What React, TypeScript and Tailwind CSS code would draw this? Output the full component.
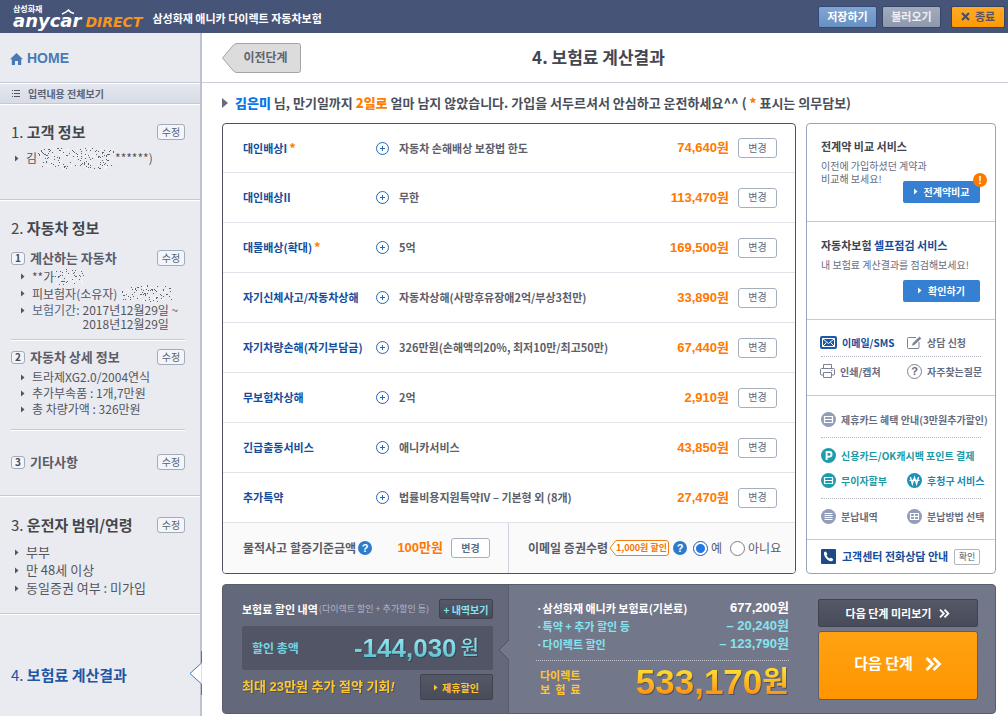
import React, { useState } from "react";

type Coverage = { name: string; required?: boolean; detail: string; price: string };

const coverages: Coverage[] = [
  { name: "대인배상I", required: true, detail: "자동차 손해배상 보장법 한도", price: "74,640" },
  { name: "대인배상II", detail: "무한", price: "113,470" },
  { name: "대물배상(확대)", required: true, detail: "5억", price: "169,500" },
  { name: "자기신체사고/자동차상해", detail: "자동차상해(사망후유장애2억/부상3천만)", price: "33,890" },
  { name: "자기차량손해(자기부담금)", detail: "326만원(손해액의20%, 최저10만/최고50만)", price: "67,440" },
  { name: "무보험차상해", detail: "2억", price: "2,910" },
  { name: "긴급출동서비스", detail: "애니카서비스", price: "43,850" },
  { name: "추가특약", detail: "법률비용지원특약IV – 기본형 외 (8개)", price: "27,470" },
];

const num = "font-['Liberation_Sans','Noto_Sans_CJK_KR',sans-serif]";

function Scramble({ width, height, seed }: { width: number; height: number; seed: number }) {
  const dots: React.ReactNode[] = [];
  let s = seed;
  const next = () => {
    s = (s * 1103515245 + 12345) % 2147483648;
    return s / 2147483648;
  };
  const count = Math.round((width * height) / 7);
  for (let i = 0; i < count; i++) {
    const x = Math.floor(next() * width);
    const y = Math.floor(next() * height);
    const tone = next();
    const dx = (x - width / 2) / (width / 2);
    const dy = (y - height / 2) / (height / 2);
    if (dx * dx * dx * dx + dy * dy * dy * dy > 1) continue;
    dots.push(<rect key={i} x={x} y={y} width="1" height="1" fill={tone > 0.65 ? "#ffffff" : "#62626f"} />);
  }
  return (
    <svg width={width} height={height} className="shrink-0" aria-hidden="true" shapeRendering="crispEdges">
      {dots}
    </svg>
  );
}

function Arrow({ className }: { className: string }) {
  return (
    <svg width="4" height="7" viewBox="0 0 4 7" className={"shrink-0 " + className} aria-hidden="true">
      <path d="M0 0.5 L3.5 3.5 L0 6.5 Z" fill="currentColor" />
    </svg>
  );
}

function EditButton({ label }: { label: string }) {
  return (
    <button
      type="button"
      aria-label={label + " 수정"}
      className="ml-auto flex h-4 w-7 shrink-0 items-center justify-center rounded-[3px] border border-[#a2abb8] bg-[#f4f5f8] pb-px text-[10px] leading-none text-[#55657a]"
    >
      수정
    </button>
  );
}

function ChangeButton({ label }: { label: string }) {
  return (
    <button
      type="button"
      aria-label={label + " 변경"}
      className="flex h-5 w-[39px] shrink-0 items-center justify-center rounded-[3px] border border-[#a5afbd] bg-white pb-px text-[10px] leading-none text-[#5c6c80]"
    >
      변경
    </button>
  );
}

function SideHeading({ no, children, edit }: { no: string; children: string; edit?: boolean }) {
  return (
    <div className="flex h-[22px] items-center">
      <h2 className="text-[15px] leading-[22px] text-[#46464d]">
        {no}. <span className="font-bold">{children}</span>
      </h2>
      {edit && <EditButton label={children} />}
    </div>
  );
}

function SubHeading({ no, children }: { no: string; children: string }) {
  return (
    <div className="flex h-5 items-center">
      <span className="flex h-[13px] w-[14px] items-center justify-center rounded-[3px] border border-[#a2abb8] bg-[#f4f5f8] text-[10px] font-bold leading-none text-[#4a4a55]">
        {no}
      </span>
      <h3 className="ml-[5px] text-[13px] font-bold text-[#5c5c68]">{children}</h3>
      <EditButton label={children} />
    </div>
  );
}

function HelpBadge() {
  return (
    <button
      type="button"
      aria-label="도움말"
      className={"flex size-[14px] shrink-0 items-center justify-center rounded-full bg-[#2f7bcb] text-[11px] font-bold leading-none text-white " + num}
    >
      ?
    </button>
  );
}

function Chevrons({ className }: { className: string }) {
  return (
    <svg viewBox="0 0 17 14" className={className} fill="none" stroke="currentColor" strokeWidth="2.8" aria-hidden="true">
      <path d="M1.5 1 L7.5 7 L1.5 13 M8.5 1 L14.5 7 L8.5 13" />
    </svg>
  );
}

function CardIcon({ color, kind }: { color: string; kind: "card" | "lines" | "grid" | "p" | "won" }) {
  return (
    <svg width="15" height="15" viewBox="0 0 15 15" className="shrink-0" fill="none" aria-hidden="true">
      <circle cx="7.5" cy="7.5" r="7.5" fill={color} />
      {kind === "card" && <path d="M3.5 4.5h8v6h-8z M3.5 7.5h8" stroke="#fff" strokeWidth="1.2" />}
      {kind === "lines" && <path d="M3.5 4.5h8M3.5 6.5h8M3.5 8.5h8M3.5 10.5h8" stroke="#fff" />}
      {kind === "grid" && <path d="M3.5 4.5h8v6h-8z M3.5 7.5h8 M7.5 4.5v6" stroke="#fff" strokeWidth="1.1" />}
      {kind === "p" && <path d="M5.6 12V4h2.6a2.3 2.3 0 0 1 0 4.7H5.6" stroke="#fff" strokeWidth="1.9" />}
      {kind === "won" && <path d="M3.4 4l2 7 2.1-6.6L9.6 11l2-7M2.5 7.3h10" stroke="#fff" strokeWidth="1.3" />}
    </svg>
  );
}

function Header() {
  return (
    <header className="flex h-[33px] items-center bg-[#465478] pl-[13px] pr-[3px]">
      <a href="#home" className="relative flex h-[33px] flex-col text-white">
        <span className="mt-[3px] text-[8px] font-bold leading-[11px]">삼성화재</span>
        <span className="flex items-baseline gap-1 font-['DejaVu_Sans',sans-serif] font-bold italic leading-[14px]">
          <span className="text-[18px]">anycar</span>
          <span className="text-[14px] text-[#f7941d]">DIRECT</span>
        </span>
        <svg width="14" height="6" viewBox="0 0 14 6" className="absolute left-12 top-[9px]" fill="none" aria-hidden="true">
          <path d="M1 5 Q5 3.5 7.5 1 Q9 3.5 13 4.5" stroke="#fff" strokeWidth="1.5" />
        </svg>
      </a>
      <p className="ml-[10px] mt-1 text-[11px] font-bold text-white">삼성화재 애니카 다이렉트 자동차보험</p>
      <div className="ml-auto flex text-[11px] font-bold leading-[17px]">
        <button type="button" className="h-[22px] w-[59px] rounded-[2px] border border-[#34497a] bg-linear-to-b from-[#83a6d3] to-[#6690c2] text-white">
          저장하기
        </button>
        <button type="button" className="ml-[5px] h-[22px] w-[59px] rounded-[2px] border border-[#364468] bg-linear-to-b from-[#a3abbd] to-[#8f98ac] text-[#eef0f5]">
          불러오기
        </button>
        <button type="button" className="ml-[10px] flex h-[22px] w-[54px] items-center justify-center gap-[5px] rounded-[2px] border border-[#364468] bg-linear-to-b from-[#ffab26] to-[#ff9a00] text-[#5b5360]">
          <svg width="9" height="9" viewBox="0 0 9 9" aria-hidden="true">
            <path d="M1 1l7 7M8 1L1 8" stroke="#4c4f66" strokeWidth="2.2" />
          </svg>
          종료
        </button>
      </div>
    </header>
  );
}

function Sidebar() {
  const section = "border-b border-t border-b-[#c6cad4] border-t-white pl-[11px] pr-[15px]";
  const item = "flex items-center gap-[7px]";
  return (
    <aside className="relative w-[202px] shrink-0 border-r-2 border-[#bfc3ce] bg-[#e9ebf0] text-[12px] text-[#55555f]">
      <a href="#home" className="flex h-[50px] items-center gap-1 border-b border-[#c6cad4] pl-[10px] pt-[2px] text-[#4a7ab5]">
        <svg width="13" height="12" viewBox="0 0 13 12" aria-hidden="true">
          <path d="M6.5 0 L13 6.2 H11.2 V12 H8 V8 H5 V12 H1.8 V6.2 H0 Z" fill="currentColor" />
        </svg>
        <span className={"text-[14px] font-bold " + num}>HOME</span>
      </a>
      <a
        href="#all"
        className="flex h-[21px] items-center gap-2 border-b border-t border-b-[#c3c8d4] border-t-white bg-linear-to-b from-[#e4e7ee] to-[#d7dbe6] pl-3 text-[10px] font-bold text-[#5c6273]"
      >
        <svg width="8" height="7" viewBox="0 0 8 7" shapeRendering="crispEdges" aria-hidden="true">
          <path d="M0 .5h1M2 .5h6M0 3.5h1M2 3.5h6M0 6.5h1M2 6.5h6" stroke="#4f5566" />
        </svg>
        입력내용 전체보기
      </a>

      <section className={section + " pb-[31px] pt-4"}>
        <SideHeading no="1" edit>고객 정보</SideHeading>
        <div className="ml-1 mt-[5px] flex h-5 items-center">
          <Arrow className="mr-[7px]" />
          김
          <Scramble width={78} height={22} seed={11} />
          ******)
        </div>
      </section>

      <section className={section + " pb-[23px] pt-4"}>
        <SideHeading no="2">자동차 정보</SideHeading>
        <div className="mt-[9px] border-b border-[#c6cad4] pb-2">
          <SubHeading no="1">계산하는 자동차</SubHeading>
          <ul className="pl-[10px]">
            <li className={item + " h-[17px]"}>
              <Arrow className="" />
              <span className="flex items-center">
                **가
                <Scramble width={30} height={17} seed={5} />
              </span>
            </li>
            <li className={item + " h-[17px]"}>
              <Arrow className="" />
              <span className="flex items-center gap-1 whitespace-nowrap">
                피보험자(소유자)
                <Scramble width={52} height={17} seed={77} />
              </span>
            </li>
            <li className="mt-px flex items-start gap-[7px] whitespace-nowrap leading-[14px]">
              <Arrow className="mt-1" />
              <span className="text-[#55657a]">보험기간:</span>
              <span className="-ml-1">
                2017년12월29일 ~<br />
                2018년12월29일
              </span>
            </li>
          </ul>
        </div>
        <div className="border-b border-t border-b-[#c6cad4] border-t-white pb-3 pt-[6px]">
          <SubHeading no="2">자동차 상세 정보</SubHeading>
          <ul className="mt-[2px] pl-[10px]">
            {["트라제XG2.0/2004연식", "추가부속품 : 1개,7만원", "총 차량가액 : 326만원"].map((t) => (
              <li key={t} className={item + " h-4"}>
                <Arrow className="" />
                {t}
              </li>
            ))}
          </ul>
        </div>
        <div className="border-t border-white pt-[21px]">
          <SubHeading no="3">기타사항</SubHeading>
        </div>
      </section>

      <section className={section + " pb-4 pt-[17px]"}>
        <SideHeading no="3" edit>운전자 범위/연령</SideHeading>
        <ul className="ml-1 mt-[7px] text-[13px]">
          {["부부", "만 48세 이상", "동일증권 여부 : 미가입"].map((t) => (
            <li key={t} className={item + " h-[18px]"}>
              <Arrow className="" />
              {t}
            </li>
          ))}
        </ul>
      </section>

      <section className="relative border-t border-white pl-[11px] pt-[49px]">
        <h2 className="text-[15px] leading-[22px] text-[#1d56a5]">
          4. <span className="font-bold">보험료 계산결과</span>
        </h2>
        <svg width="13" height="44" viewBox="0 0 13 44" className="absolute -right-[2px] top-9" aria-hidden="true">
          <path d="M12.5 12 L1 22.5 L12.5 33 Z" fill="#fff" />
          <path d="M12.5 0 V12 L1 22.5 L12.5 33 V44" fill="none" stroke="#2e7fdb" />
        </svg>
      </section>
    </aside>
  );
}

function CoveragePanel() {
  const [email, setEmail] = useState("yes");
  const radio =
    "size-[15px] shrink-0 appearance-none rounded-full border border-[#7d7d85] bg-white checked:border-[#1f57b0] checked:bg-[radial-gradient(circle,#2478e4_0,#2478e4_4px,#ffffff_5px)]";
  const line = "border-b border-[#e0e3ea] ";
  return (
    <div className="min-w-0 flex-1 overflow-hidden rounded-[4px] border border-[#50515f] bg-white">
      <table className="w-full border-separate border-spacing-0 text-[11px]">
        <tbody>
          {coverages.map((c) => (
            <tr key={c.name} className="h-[50px] first:h-[49px]">
              <th scope="row" className={line + "w-[153px] whitespace-nowrap p-0 pl-5 text-left text-[11px] font-bold text-[#134d9c]"}>
                {c.name}
                {c.required && <span className="ml-[2px] text-[13px] leading-none text-[#ff7e00]">*</span>}
              </th>
              <td className={line + "whitespace-nowrap p-0 font-bold text-[#5e5f6a]"}>
                <div className="flex items-center gap-[10px]">
                  <svg width="13" height="13" viewBox="0 0 13 13" className="shrink-0" fill="none" stroke="#2467b5" aria-hidden="true">
                    <circle cx="6.5" cy="6.5" r="6" />
                    <path d="M4 6.5h5M6.5 4v5" />
                  </svg>
                  {c.detail}
                </div>
              </td>
              <td className={line + "p-0 pr-[18px]"}>
                <div className="flex items-center justify-end gap-[9px]">
                  <span className={"whitespace-nowrap text-[13px] font-bold text-[#ff7800] " + num}>{c.price}원</span>
                  <ChangeButton label={c.name} />
                </div>
              </td>
            </tr>
          ))}
        </tbody>
      </table>
      <div className="grid h-[50px] grid-cols-2 whitespace-nowrap bg-[#fafafb] text-[12px] font-bold text-[#5a5b66]">
        <div className="flex items-center border-r border-[#cfd3dc] pl-5">
          물적사고 할증기준금액
          <span className="ml-[2px] flex">
            <HelpBadge />
          </span>
          <span className={"ml-auto text-[13px] font-bold text-[#ff7800] " + num}>100만원</span>
          <span className="ml-2 mr-[18px] flex">
            <ChangeButton label="물적사고 할증기준금액" />
          </span>
        </div>
        <div className="flex items-center pl-[19px]">
          이메일 증권수령
          <span className="relative ml-px flex h-4 w-[60px] items-center justify-end pr-[2px] text-[9px] font-bold text-[#f57400]">
            <svg width="60" height="16" viewBox="0 0 60 16" className="absolute inset-0" aria-hidden="true">
              <path d="M1 8 L6.5 1 Q7 .5 8 .5 H57 Q59.500 .5 59.500 3 V13 Q59.500 15.500 57 15.500 H8 Q7 15.500 6.500 15 Z" fill="#fff" stroke="#f57c14" />
            </svg>
            <span className="relative pb-px leading-none">1,000원 할인</span>
          </span>
          <span className="ml-1 flex">
            <HelpBadge />
          </span>
          <label className="ml-[6px] flex items-center gap-[3px] font-normal">
            <input type="radio" name="email" checked={email === "yes"} onChange={() => setEmail("yes")} className={radio} />예
          </label>
          <label className="ml-2 flex items-center gap-[3px] font-normal">
            <input type="radio" name="email" checked={email === "no"} onChange={() => setEmail("no")} className={radio} />
            아니요
          </label>
        </div>
      </div>
    </div>
  );
}

function ServicePanel() {
  const blue = "flex h-[22px] w-[77px] items-center justify-center gap-[6px] rounded-[2px] bg-[#3580d2] pb-px text-[10px] font-bold text-white";
  const link = "flex items-center gap-[5px] whitespace-nowrap";
  const divider = "mx-[14px] border-t border-dotted border-[#b3b8c4]";
  return (
    <aside className="flex w-[190px] shrink-0 flex-col rounded-[4px] border border-[#98a3bf] bg-white text-[10px] text-[#666d82]">
      <section className="h-[98px] border-b border-[#c5c9d8] px-[14px] pt-[14px]">
        <h3 className="text-[11px] font-bold leading-4 text-[#3f4550]">전계약 비교 서비스</h3>
        <p className="mt-[5px] leading-[13px]">
          이전에 가입하셨던 계약과
          <br />
          비교해 보세요!
        </p>
        <div className="relative -mt-1 ml-auto mr-px w-[77px]">
          <button type="button" className={blue}>
            <Arrow className="" />
            전계약비교
          </button>
          <span className={"absolute -right-[7px] -top-2 flex size-[14px] items-center justify-center rounded-full bg-[#ff7800] text-[11px] font-bold leading-none text-white " + num}>
            !
          </span>
        </div>
      </section>
      <section className="h-[98px] border-b border-[#c5c9d8] px-[14px] pt-[15px]">
        <h3 className="whitespace-nowrap text-[11px] font-bold leading-4 text-[#3f4550]">
          자동차보험 <span className="text-[#134d9c]">셀프점검 서비스</span>
        </h3>
        <p className="mt-[5px] whitespace-nowrap leading-[13px]">내 보험료 계산결과를 점검해보세요!</p>
        <button type="button" className={blue + " ml-auto mr-px mt-[9px]"}>
          <Arrow className="" />
          확인하기
        </button>
      </section>
      <section className="h-[76px] border-b border-[#c5c9d8] pt-2">
        <div className="flex h-7 items-center pl-[13px]">
          <a href="#mail" className={link + " w-[87px] font-bold text-[#134d9c]"}>
            <svg width="17" height="13" viewBox="0 0 17 13" className="shrink-0" aria-hidden="true">
              <rect width="17" height="13" rx="2" fill="#1c58a8" />
              <path d="M2.500 2.500h12v8h-12z M2.500 2.500L8.500 7.500L14.500 2.500 M2.500 10.500L6.500 6.500 M14.500 10.500L10.500 6.500" fill="none" stroke="#fff" />
            </svg>
            이메일/SMS
          </a>
          <a href="#consult" className={link + " font-bold"}>
            <svg width="15" height="13" viewBox="0 0 15 13" className="shrink-0" fill="none" stroke="#7a8294" aria-hidden="true">
              <path d="M9 1.500H1.500Q.5 1.500 .5 2.500V11.500Q.5 12.500 1.500 12.500H11Q12 12.500 12 11.500V6" />
              <path d="M5 9.500L6 7L12.500 .8L14.200 2.400L7.500 8.700Z" fill="#7a8294" strokeWidth=".3" />
            </svg>
            상담 신청
          </a>
        </div>
        <div className={divider} />
        <div className="flex h-[28px] items-center pl-[13px] font-bold">
          <a href="#print" className={link + " w-[87px]"}>
            <svg width="15" height="14" viewBox="0 0 15 14" className="shrink-0" fill="none" stroke="#7a8294" aria-hidden="true">
              <path d="M3.500 4V.5h8V4M3.500 11H1.500Q.5 11 .5 10V5.500Q.5 4.500 1.500 4.500H13.500Q14.500 4.500 14.500 5.500V10Q14.500 11 13.500 11H11.500" />
              <path d="M3.500 8.500h8v5h-8zM11 6.500h1.500" />
            </svg>
            인쇄/캡쳐
          </a>
          <a href="#faq" className={link}>
            <span className={"flex size-[15px] items-center justify-center rounded-full border border-[#7a8294] text-[11px] font-bold leading-none " + num}>?</span>
            자주찾는질문
          </a>
        </div>
      </section>
      <section className="h-[144px] border-b border-[#c5c9d8] pt-2 font-bold">
        <a href="#card" className={link + " mb-[2px] h-[31px] pl-[14px]"}>
          <CardIcon color="#929dba" kind="card" />
          제휴카드 혜택 안내(3만원추가할인)
        </a>
        <div className={divider} />
        <a href="#point" className={link + " mt-[5px] h-[25px] pl-[14px] text-[#1a9aa6]"}>
          <CardIcon color="#1f9cac" kind="p" />
          신용카드/OK캐시백 포인트 결제
        </a>
        <div className="flex h-[25px] items-center pl-[14px] text-[#1a9aa6]">
          <a href="#free" className={link + " w-[86px]"}>
            <CardIcon color="#1f9cac" kind="card" />
            무이자할부
          </a>
          <a href="#later" className={link + " text-[#1789b3]"}>
            <CardIcon color="#1a92bc" kind="won" />
            후청구 서비스
          </a>
        </div>
        <div className={divider + " mt-[5px]"} />
        <div className="flex h-[35px] items-center pl-[14px]">
          <a href="#list" className={link + " w-[86px]"}>
            <CardIcon color="#929dba" kind="lines" />
            분납내역
          </a>
          <a href="#method" className={link}>
            <CardIcon color="#929dba" kind="grid" />
            분납방법 선택
          </a>
        </div>
      </section>
      <section className="flex flex-1 items-center pl-[14px] pr-[15px]">
        <svg width="15" height="15" viewBox="0 0 15 15" className="shrink-0" aria-hidden="true">
          <rect width="15" height="15" rx="1" fill="#1c4a8a" />
          <path d="M3 3.500Q4.500 2 5.300 3L6.300 5Q6.300 5.800 5.500 6.300Q6.500 8.500 8.500 9.500Q9.300 8.500 10 8.800L12 10Q12.600 10.800 11.200 12Q9.500 13 6.500 10.800Q2.500 7.500 3 3.500Z" fill="#fff" />
        </svg>
        <h3 className="ml-[6px] whitespace-nowrap text-[11px] font-bold text-[#134d9c]">고객센터 전화상담 안내</h3>
        <button type="button" className="ml-auto flex h-4 w-[26px] shrink-0 items-center justify-center rounded-[2px] border border-[#b0b5c0] text-[9px] leading-none text-[#555c6b]">
          확인
        </button>
      </section>
    </aside>
  );
}

function Summary() {
  const dark = "border border-[#40434f] bg-linear-to-b from-[#555967] to-[#484c59] rounded-[2px]";
  return (
    <section className="mt-[10px] flex h-[130px] overflow-hidden rounded-[4px] border border-[#5a5d6e] bg-[#73778a] whitespace-nowrap">
      <div className="relative w-[286px] shrink-0 border-r border-[#585c6c] bg-[#64687b] pl-[19px] pr-[15px] pt-[14px]">
        <div className="flex h-5 items-center">
          <h3 className="text-[11px] font-bold text-white">보험료 할인 내역</h3>
          <span className="ml-px text-[9px] text-[#b0b6c9]">(다이렉트 할인 + 추가할인 등)</span>
          <button type="button" className={dark + " ml-auto h-5 w-[54px] text-[10px] font-bold leading-[17px] text-[#84e4ef]"}>
            + 내역보기
          </button>
        </div>
        <div className="mt-[7px] flex h-11 items-center justify-between rounded-[2px] bg-[#515566] pl-[10px] pr-[14px]">
          <span className="text-[12px] font-bold text-[#75d5e2]">할인 총액</span>
          <span className={"flex items-center gap-1 bg-linear-to-b from-[#a5f1f7] to-[#4ab8ca] bg-clip-text font-bold text-transparent drop-shadow-[1px_1px_0_#3c404d] " + num}>
            <span className="text-[26px] leading-8">-144,030</span>
            <span className="text-[20px] font-medium leading-8">원</span>
          </span>
        </div>
        <div className="mt-1 flex h-[26px] items-center">
          <span className={"text-[13px] font-bold text-[#ffc72e] drop-shadow-[1px_1px_0_#4c4f5c] " + num}>
            최대 23만원 추가 절약 기회<i>!</i>
          </span>
          <button type="button" className={dark + " ml-auto flex h-[26px] w-[73px] items-center justify-center gap-1 text-[10px] font-bold text-[#ffc72e]"}>
            <Arrow className="" />
            제휴할인
          </button>
        </div>
        <svg width="11" height="20" viewBox="0 0 11 20" className="absolute -right-px top-[55px]" aria-hidden="true">
          <path d="M11 0 L1 10 L11 20 Z" fill="#73778a" />
          <path d="M11 0 L1 10 L11 20" fill="none" stroke="#505462" />
        </svg>
      </div>
      <div className="flex min-w-0 flex-1 justify-between pl-[27px] pr-[17px]">
        <div className="w-[253px] pt-[14px]">
          <dl className="text-[11px] font-bold leading-[18px]">
            {[
              ["삼성화재 애니카 보험료(기본료)", "677,200원", "text-white"],
              ["특약 + 추가 할인 등", "– 20,240원", "text-[#84e4ef]"],
              ["다이렉트 할인", "– 123,790원", "text-[#84e4ef]"],
            ].map(([k, v, c]) => (
              <div key={k} className={"flex justify-between " + c}>
                <dt>
                  <span>·</span>
                  {k}
                </dt>
                <dd className={"text-[13px] " + num}>{v}</dd>
              </div>
            ))}
          </dl>
          <div className="mt-[7px] border-t border-dotted border-[#c3c6d0]" />
          <div className="flex h-[42px] items-center justify-between pl-1 font-bold">
            <span className="text-[11px] leading-[14px] text-[#ffc72e]">
              다이렉트
              <span className="flex justify-between">
                <span>보</span>
                <span>험</span>
                <span>료</span>
              </span>
            </span>
            <span className={"flex items-center bg-linear-to-b from-[#ffdc2e] from-20% to-[#ff9412] to-80% bg-clip-text text-transparent drop-shadow-[1px_1px_0_#4f5260] " + num}>
              <span className="text-[35px] leading-10">533,170</span>
              <span className="text-[29px] leading-10">원</span>
            </span>
          </div>
        </div>
        <div className="w-[160px] shrink-0 pt-[14px] text-white">
          <button type="button" className={dark + " flex h-7 w-full items-center justify-center gap-2 text-[11px] font-bold"}>
            다음 단계 미리보기
            <Chevrons className="h-[9px] w-[11px]" />
          </button>
          <button
            type="button"
            className="mt-1 flex h-[69px] w-full items-center justify-center gap-3 rounded-[3px] border border-[#5a5d6e] bg-linear-to-b from-[#ffa212] to-[#ff9500] pb-1 text-[15px] font-bold"
          >
            다음 단계
            <Chevrons className="h-[14px] w-[17px]" />
          </button>
        </div>
      </div>
    </section>
  );
}

export default function App() {
  return (
    <div className="flex min-h-screen flex-col bg-white font-['Noto_Sans_CJK_KR',sans-serif]">
      <Header />
      <div className="flex flex-1">
        <Sidebar />
        <main className="min-w-0 flex-1">
          <div className="grid h-[50px] grid-cols-[79px_1fr_100px] items-center border-b border-[#c9ced8] pl-5 pr-3">
            <button type="button" className="relative h-[30px] pb-[2px] pl-2 text-[12px] font-bold text-[#63646e]">
              <svg width="79" height="30" viewBox="0 0 79 30" className="absolute inset-0" aria-hidden="true">
                <path d="M.5 15 L11.500 2 Q13 .5 15 .5 H76.500 Q78.500 .5 78.500 2.500 V27.500 Q78.500 29.500 76.500 29.500 H15 Q13 29.500 11.500 28 Z" fill="#dcdcdd" stroke="#a3a3a8" />
              </svg>
              <span className="relative">이전단계</span>
            </button>
            <h1 className="pb-[2px] text-center text-[17px] font-bold text-[#45464f]">4. 보험료 계산결과</h1>
          </div>
          <div className="pb-[2px] pl-5 pr-3">
            <p className="flex h-10 items-center whitespace-nowrap text-[13px] font-bold text-[#4a4f5a]">
              <svg width="6" height="10" viewBox="0 0 6 10" className="mr-[7px] shrink-0" aria-hidden="true">
                <path d="M0 0 L6 5 L0 10 Z" fill="#6c6c78" />
              </svg>
              <span>
                <b className="text-[#0a76e8]">김은미</b> 님, 만기일까지 <b className="text-[#ff7e00]">2일로</b> 얼마 남지 않았습니다. 가입을 서두르셔서 안심하고 운전하세요^^ ({" "}
                <b className="text-[#ff7e00]">*</b> 표시는 의무담보)
              </span>
            </p>
            <div className="flex gap-[10px]">
              <CoveragePanel />
              <ServicePanel />
            </div>
            <Summary />
          </div>
        </main>
      </div>
    </div>
  );
}
